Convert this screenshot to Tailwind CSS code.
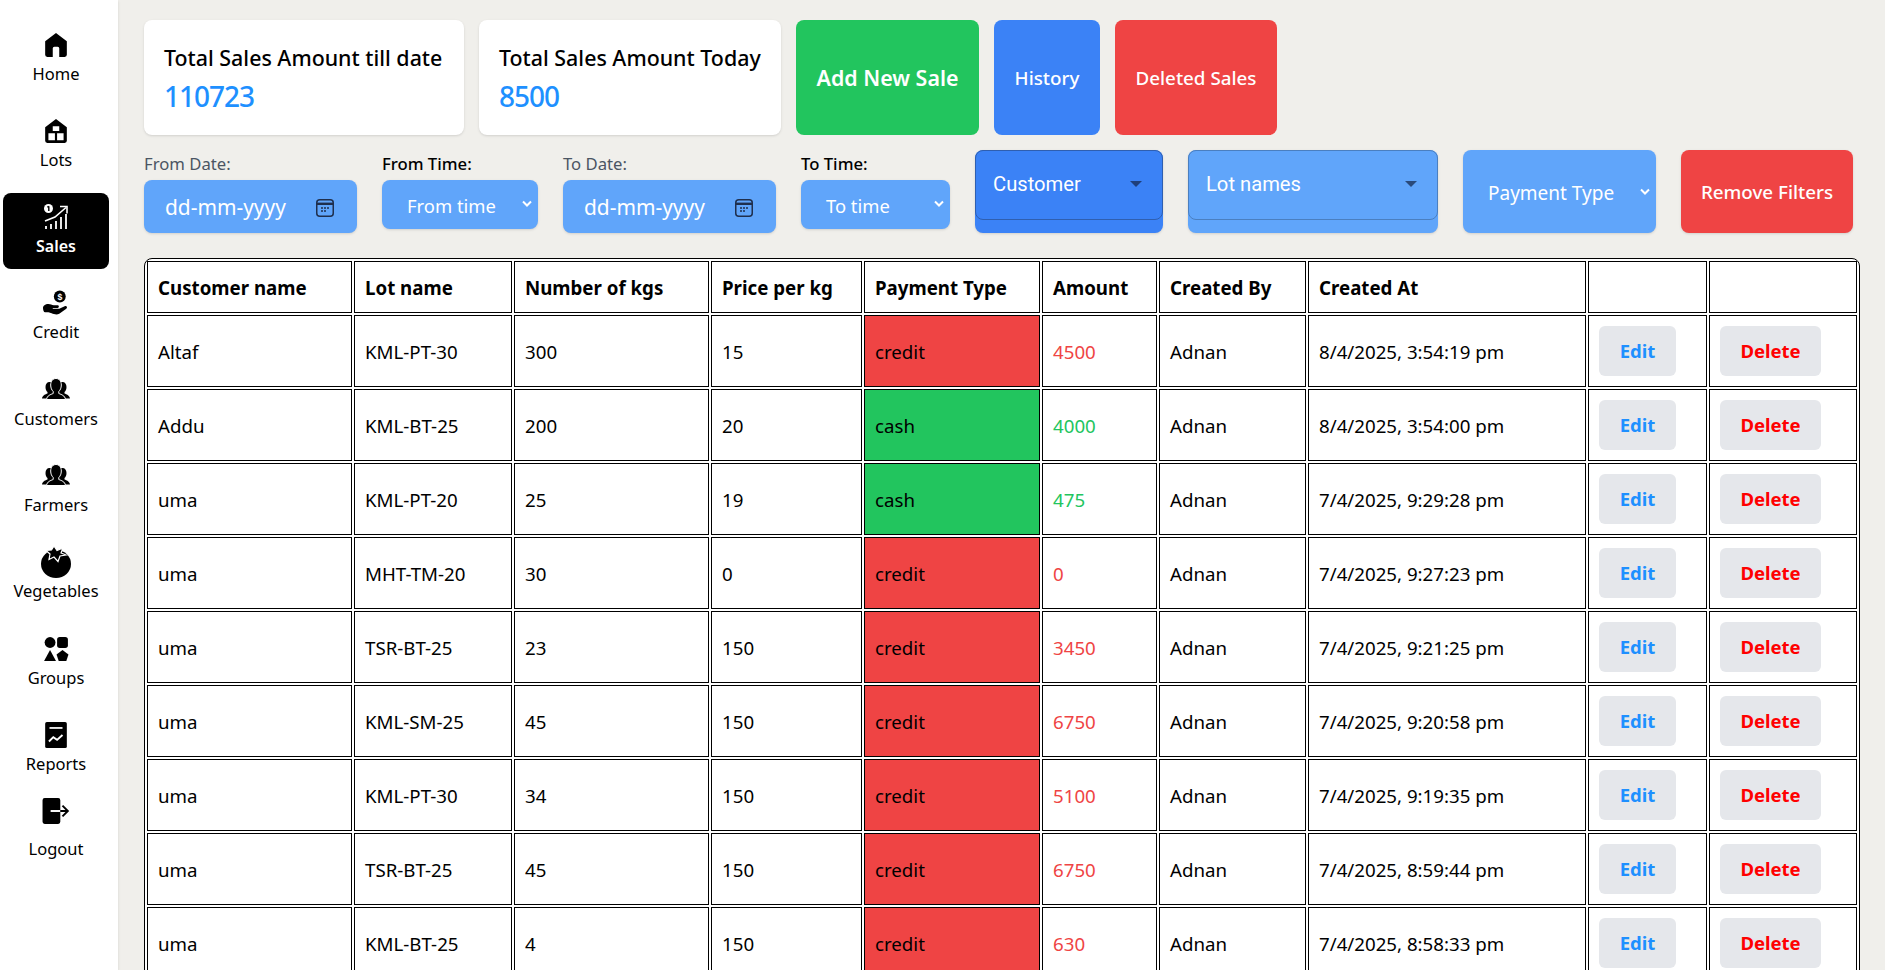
<!DOCTYPE html>
<html lang="en">
<head>
  <meta charset="UTF-8">
  <meta name="viewport" content="width=device-width, initial-scale=1.0">
  <title>Sales</title>
  <script src="https://cdn.jsdelivr.net/npm/@tailwindcss/browser@4"></script>
</head>
<body class="bg-[#f0efeb] h-screen overflow-hidden flex font-['Noto_Sans',sans-serif] text-black">

  <!-- Sidebar -->
  <nav class="w-[118px] h-full shrink-0 bg-white shadow-sm pt-[20.6px] px-[3px] flex flex-col gap-[10.3px]">
    <a class="h-[76px] w-[106px] shrink-0 pt-[11px] flex flex-col items-center rounded-lg">
      <svg class="w-[26px] h-[26px]" viewBox="0 0 24 24" fill="currentColor"><path d="M12 1 2 8.500V21a2 2 0 0 0 2 2h5v-8a1.500 1.500 0 0 1 1.500-1.500h3A1.500 1.500 0 0 1 15 15v8h5a2 2 0 0 0 2-2V8.500z"/></svg>
      <span class="text-[16.5px] leading-[26px] mt-[3px]">Home</span>
    </a>
    <a class="h-[76px] w-[106px] shrink-0 pt-[11px] flex flex-col items-center rounded-lg">
      <svg class="w-[26px] h-[26px]" viewBox="0 0 24 24" fill="currentColor"><path fill-rule="evenodd" d="M12 1 2 8.500V21a2 2 0 0 0 2 2h16a2 2 0 0 0 2-2V8.500zM9 7.500h6V12H9zM5 14h6v6.500H5zm8 0h6v6.500h-6z"/></svg>
      <span class="text-[16.5px] leading-[26px] mt-[3px]">Lots</span>
    </a>
    <a class="h-[76px] w-[106px] shrink-0 pt-[11px] flex flex-col items-center rounded-lg bg-black text-white">
      <svg class="w-[26px] h-[26px]" viewBox="0 0 26 26" fill="none" stroke="currentColor"><circle cx="5.500" cy="4.500" r="4.500" fill="currentColor" stroke="none"/><path d="M5.800 2.200 4.300 3.300M5.800 2.200v4.800" stroke="#000" stroke-width="1.400"/><path d="M2 17 12 13 23 3.500" stroke-width="1.600"/><path d="M17 2.500h7v7" stroke-width="1.600"/><path d="M3 22v3M8 20v5M13 17v8M18 13v12M23 10v15" stroke-width="1.800"/></svg>
      <span class="text-[16px] leading-[26px] mt-[3px] font-semibold">Sales</span>
    </a>
    <a class="h-[76px] w-[106px] shrink-0 pt-[11px] flex flex-col items-center rounded-lg">
      <svg class="w-[26px] h-[26px]" viewBox="0 0 24 24"><circle cx="15.500" cy="6" r="5.500" fill="currentColor"/><text x="15.500" y="9" font-size="8" font-weight="700" text-anchor="middle" fill="#fff" font-family="Liberation Sans">$</text><path d="M0 16.500c0-1.800 2-3.500 5-3.500 2 0 3 1 5 1h3.500c1.500 0 1.500 2.500 0 2.500H9v.8h6l5-2.300c1.800-.7 3 1.200 1.500 2.300L15 22c-2 1-5 .5-7-.5L5 20.500H2c-1.500 0-2-2.500-2-4z" fill="currentColor"/></svg>
      <span class="text-[16.5px] leading-[26px] mt-[3px]">Credit</span>
    </a>
    <a class="h-[76px] w-[106px] shrink-0 pt-[11px] flex flex-col items-center rounded-lg">
      <svg class="w-[28px] h-[26px]" viewBox="0 0 28 24" fill="currentColor"><path d="M7.500 4C5 4 3.500 6 3.500 9c0 2.500.8 4 2 5v1.500C3.500 16.500.5 17 0 20.500h6l8-6V4zM20.500 4c2.500 0 4 2 4 5 0 2.500-.8 4-2 5v1.500c2 1 5 1.500 5.500 5h-6l-8-6V4z"/><path d="M14 .5c3.200 0 5.300 2.700 5.300 6.500 0 3-1 5-2.500 6.500v2c2.500 1 6.200 2 6.700 6H4.500c.5-4 4.200-5 6.700-6v-2C9.700 12 8.700 10 8.700 7 8.700 3.200 10.800.5 14 .5z" stroke="#fff" stroke-width="1"/></svg>
      <span class="text-[16.5px] leading-[26px] mt-[3px]">Customers</span>
    </a>
    <a class="h-[76px] w-[106px] shrink-0 pt-[11px] flex flex-col items-center rounded-lg">
      <svg class="w-[28px] h-[26px]" viewBox="0 0 28 24" fill="currentColor"><path d="M7.500 4C5 4 3.500 6 3.500 9c0 2.500.8 4 2 5v1.500C3.500 16.500.5 17 0 20.500h6l8-6V4zM20.500 4c2.500 0 4 2 4 5 0 2.500-.8 4-2 5v1.500c2 1 5 1.500 5.500 5h-6l-8-6V4z"/><path d="M14 .5c3.200 0 5.300 2.700 5.300 6.500 0 3-1 5-2.500 6.500v2c2.500 1 6.200 2 6.700 6H4.500c.5-4 4.200-5 6.700-6v-2C9.700 12 8.700 10 8.700 7 8.700 3.200 10.800.5 14 .5z" stroke="#fff" stroke-width="1"/></svg>
      <span class="text-[16.5px] leading-[26px] mt-[3px]">Farmers</span>
    </a>
    <a class="h-[76px] w-[106px] shrink-0 pt-[11px] flex flex-col items-center rounded-lg">
      <svg class="w-[30px] h-[33px] -mt-[4px] mb-[-3px]" viewBox="0 0 30 33" fill="currentColor"><ellipse cx="15" cy="19" rx="15" ry="14"/><path d="M13 1l3 4.500 6-2.500-2 5 5 2-6 1-2 5.500-4-4.500-5 2.500 1-5.500-4-3.500 5.500-.5z" stroke="#fff" stroke-width="1.200"/></svg>
      <span class="text-[16.5px] leading-[26px] mt-[3px]">Vegetables</span>
    </a>
    <a class="h-[76px] w-[106px] shrink-0 pt-[11px] flex flex-col items-center rounded-lg">
      <svg class="w-[26px] h-[26px]" viewBox="0 0 24 24" fill="currentColor"><circle cx="6.500" cy="6" r="5"/><rect x="13" y="1" width="10" height="10" rx="2.500"/><path d="M6.500 13 12 23H1z"/><path d="M18 13l5.500 4-2 6h-7l-2-6z"/></svg>
      <span class="text-[16.5px] leading-[26px] mt-[3px]">Groups</span>
    </a>
    <a class="h-[76px] w-[106px] shrink-0 pt-[11px] flex flex-col items-center rounded-lg">
      <svg class="w-[26px] h-[26px]" viewBox="0 0 24 24"><rect x="2" y="0" width="20" height="24" rx="1.500" fill="currentColor"/><path d="M6 5.500h12" stroke="#fff" stroke-width="1.600"/><path d="M5.500 18l4-4 3.500 2.500 5-4.500" fill="none" stroke="#fff" stroke-width="1.800"/></svg>
      <span class="text-[16.5px] leading-[26px] mt-[3px]">Reports</span>
    </a>
    <a class="h-[76px] w-[106px] shrink-0 pt-[1px] flex flex-col items-center rounded-lg">
      <svg class="w-[28px] h-[26px]" viewBox="0 0 26 24"><path d="M2.500 0H15a2 2 0 0 1 2 2v20a2 2 0 0 1-2 2H2.500a2 2 0 0 1-2-2V2a2 2 0 0 1 2-2z" fill="currentColor"/><path d="M8 12h9" stroke="#fff" stroke-width="1.800"/><path d="M17 12h7M19 7l5 5-5 5" fill="none" stroke="#000" stroke-width="1.800"/></svg>
      <span class="text-[16.5px] leading-[26px] mt-[12px]">Logout</span>
    </a>
  </nav>

  <main class="flex-1 min-w-0 pl-[26px] pt-[20px]">
    <!-- Totals and actions -->
    <div class="flex gap-[15px] h-[115px]">
      <div class="w-[320px] bg-white rounded-lg shadow-sm pl-[20px] pt-[23px]">
        <p class="text-[21.4px] leading-[30px] font-medium">Total Sales Amount till date</p>
        <p class="text-[28px] leading-[38px] mt-[4px] tracking-[-1px] font-medium text-[#1e90ff]">110723</p>
      </div>
      <div class="w-[302px] bg-white rounded-lg shadow-sm pl-[20px] pt-[23px]">
        <p class="text-[21.4px] leading-[30px] font-medium">Total Sales Amount Today</p>
        <p class="text-[28px] leading-[38px] mt-[4px] tracking-[-1px] font-medium text-[#1e90ff]">8500</p>
      </div>
      <button class="w-[183px] bg-[#22c55e] rounded-lg text-white text-[21.4px] font-semibold pt-[2px]">Add New Sale</button>
      <button class="w-[106px] bg-[#3b82f6] rounded-lg text-white text-[18.8px] font-medium pt-[2px]">History</button>
      <button class="w-[162px] bg-[#ef4444] rounded-lg text-white text-[18.8px] font-medium pt-[2px]">Deleted Sales</button>
    </div>

    <!-- Filters -->
    <div class="flex mt-[15px] h-[83px]">
      <div class="w-[213px] mr-[25px]">
        <label class="block text-[16.7px] leading-[28px] mb-[2px] text-[#4b5563]">From Date:</label>
        <div class="h-[53px] bg-[#60a5fa] rounded-lg shadow-sm text-white text-[20.9px] pt-[2px] pl-[21px] pr-[23px] flex items-center justify-between">
          <span>dd-mm-yyyy</span>
          <svg class="w-[18px] h-[18px] text-[#1f2f4d]" viewBox="0 0 18 18" fill="none" stroke="currentColor"><rect x=".75" y=".75" width="16.500" height="16.500" rx="3" stroke-width="1.500"/><path d="M1 4.800h16" stroke-width="2.400"/><path d="M5 9h2M8 9h2M11 9h2M5 12h2M8 12h2" stroke-width="1.600"/></svg>
        </div>
      </div>
      <div class="w-[156px] mr-[25px]">
        <label class="block text-[16.7px] leading-[28px] mb-[2px] font-medium">From Time:</label>
        <div class="relative">
          <select class="appearance-none w-full h-[49px] bg-[#60a5fa] rounded-lg shadow-sm text-white text-[18.4px] pt-[2px] pl-[25px]"><option>From time</option></select>
          <svg class="absolute right-[5px] top-[19px] w-[12px] h-[10px] text-white pointer-events-none" viewBox="0 0 12 10" fill="none" stroke="currentColor" stroke-width="2"><path d="M2 2.500l4 4 4-4"/></svg>
        </div>
      </div>
      <div class="w-[213px] mr-[25px]">
        <label class="block text-[16.7px] leading-[28px] mb-[2px] text-[#4b5563]">To Date:</label>
        <div class="h-[53px] bg-[#60a5fa] rounded-lg shadow-sm text-white text-[20.9px] pt-[2px] pl-[21px] pr-[23px] flex items-center justify-between">
          <span>dd-mm-yyyy</span>
          <svg class="w-[18px] h-[18px] text-[#1f2f4d]" viewBox="0 0 18 18" fill="none" stroke="currentColor"><rect x=".75" y=".75" width="16.500" height="16.500" rx="3" stroke-width="1.500"/><path d="M1 4.800h16" stroke-width="2.400"/><path d="M5 9h2M8 9h2M11 9h2M5 12h2M8 12h2" stroke-width="1.600"/></svg>
        </div>
      </div>
      <div class="w-[149px] mr-[25px]">
        <label class="block text-[16.7px] leading-[28px] mb-[2px] font-medium">To Time:</label>
        <div class="relative">
          <select class="appearance-none w-full h-[49px] bg-[#60a5fa] rounded-lg shadow-sm text-white text-[18.4px] pt-[2px] pl-[25px]"><option>To time</option></select>
          <svg class="absolute right-[5px] top-[19px] w-[12px] h-[10px] text-white pointer-events-none" viewBox="0 0 12 10" fill="none" stroke="currentColor" stroke-width="2"><path d="M2 2.500l4 4 4-4"/></svg>
        </div>
      </div>
      <div class="w-[188px] mr-[25px] bg-[#3b82f6] rounded-lg shadow-sm">
        <div class="h-[70px] border border-[#2f5fb0] rounded-lg text-white font-['Roboto',sans-serif] text-[20.2px] pb-[2px] pl-[17px] pr-[20px] flex items-center justify-between">
          <span>Customer</span>
          <span class="w-0 h-0 border-x-[6px] border-x-transparent border-t-[6px] border-t-[#1f3f7a]"></span>
        </div>
      </div>
      <div class="w-[250px] mr-[25px] bg-[#60a5fa] rounded-lg shadow-sm">
        <div class="h-[70px] border border-[#4a7fc0] rounded-lg text-white font-['Roboto',sans-serif] text-[20.2px] pb-[2px] pl-[17px] pr-[20px] flex items-center justify-between">
          <span>Lot names</span>
          <span class="w-0 h-0 border-x-[6px] border-x-transparent border-t-[6px] border-t-[#2a4a7a]"></span>
        </div>
      </div>
      <div class="relative w-[193px] mr-[25px]">
        <select class="appearance-none w-full h-full bg-[#60a5fa] rounded-lg shadow-sm text-white text-[19px] pt-[3px] pl-[25px]"><option>Payment Type</option></select>
        <svg class="absolute right-[5px] top-[37px] w-[12px] h-[10px] text-white pointer-events-none" viewBox="0 0 12 10" fill="none" stroke="currentColor" stroke-width="2"><path d="M2 2.500l4 4 4-4"/></svg>
      </div>
      <button class="w-[172px] bg-[#ef4444] rounded-lg shadow-sm text-white text-[18.8px] font-medium pt-[2px]">Remove Filters</button>
    </div>

    <!-- Sales table -->
    <div class="mt-[25px] w-[1716px] border border-black rounded-lg bg-white overflow-hidden">
      <table class="table-fixed w-full border-separate border-spacing-[2px] text-[18.7px]">
        <thead>
          <tr class="h-[52px] text-left">
            <th class="w-[205px] border border-black pl-[10px] pt-[2px] font-bold">Customer name</th>
            <th class="w-[158px] border border-black pl-[10px] pt-[2px] font-bold">Lot name</th>
            <th class="w-[195px] border border-black pl-[10px] pt-[2px] font-bold">Number of kgs</th>
            <th class="w-[151px] border border-black pl-[10px] pt-[2px] font-bold">Price per kg</th>
            <th class="w-[176px] border border-black pl-[10px] pt-[2px] font-bold">Payment Type</th>
            <th class="w-[115px] border border-black pl-[10px] pt-[2px] font-bold">Amount</th>
            <th class="w-[147px] border border-black pl-[10px] pt-[2px] font-bold">Created By</th>
            <th class="w-[278px] border border-black pl-[10px] pt-[2px] font-bold">Created At</th>
            <th class="w-[119px] border border-black"></th>
            <th class="border border-black"></th>
          </tr>
        </thead>
        <tbody id="rows"></tbody>
      </table>
    </div>
  </main>
  <div class="w-[3px] h-full shrink-0 bg-white"></div>

<script>
const sales = [
  ["Altaf", "KML-PT-30", 300, 15, "credit", 4500, "8/4/2025, 3:54:19 pm"],
  ["Addu", "KML-BT-25", 200, 20, "cash", 4000, "8/4/2025, 3:54:00 pm"],
  ["uma", "KML-PT-20", 25, 19, "cash", 475, "7/4/2025, 9:29:28 pm"],
  ["uma", "MHT-TM-20", 30, 0, "credit", 0, "7/4/2025, 9:27:23 pm"],
  ["uma", "TSR-BT-25", 23, 150, "credit", 3450, "7/4/2025, 9:21:25 pm"],
  ["uma", "KML-SM-25", 45, 150, "credit", 6750, "7/4/2025, 9:20:58 pm"],
  ["uma", "KML-PT-30", 34, 150, "credit", 5100, "7/4/2025, 9:19:35 pm"],
  ["uma", "TSR-BT-25", 45, 150, "credit", 6750, "7/4/2025, 8:59:44 pm"],
  ["uma", "KML-BT-25", 4, 150, "credit", 630, "7/4/2025, 8:58:33 pm"]
];

document.getElementById("rows").innerHTML = sales.map(s => {
  const credit = s[4] === "credit";
  return `<tr class="h-[72px]">
    <td class="border border-black pl-[10px] pt-[2px]">${s[0]}</td>
    <td class="border border-black pl-[10px] pt-[2px]">${s[1]}</td>
    <td class="border border-black pl-[10px] pt-[2px]">${s[2]}</td>
    <td class="border border-black pl-[10px] pt-[2px]">${s[3]}</td>
    <td class="border border-black pl-[10px] pt-[2px] ${credit ? "bg-[#ef4444]" : "bg-[#22c55e]"}">${s[4]}</td>
    <td class="border border-black pl-[10px] pt-[2px] ${credit ? "text-[#ef4444]" : "text-[#22c55e]"}">${s[5]}</td>
    <td class="border border-black pl-[10px] pt-[2px]">Adnan</td>
    <td class="border border-black pl-[10px] pt-[2px]">${s[6]}</td>
    <td class="border border-black pl-[10px]"><button class="w-[77px] h-[50px] bg-[#e5e7eb] rounded-md text-[18.5px] font-bold text-[#1e90ff]">Edit</button></td>
    <td class="border border-black pl-[10px]"><button class="w-[101px] h-[50px] bg-[#e5e7eb] rounded-md text-[18.5px] font-bold text-[#ff0000]">Delete</button></td>
  </tr>`;
}).join("");
</script>

</body>
</html>
